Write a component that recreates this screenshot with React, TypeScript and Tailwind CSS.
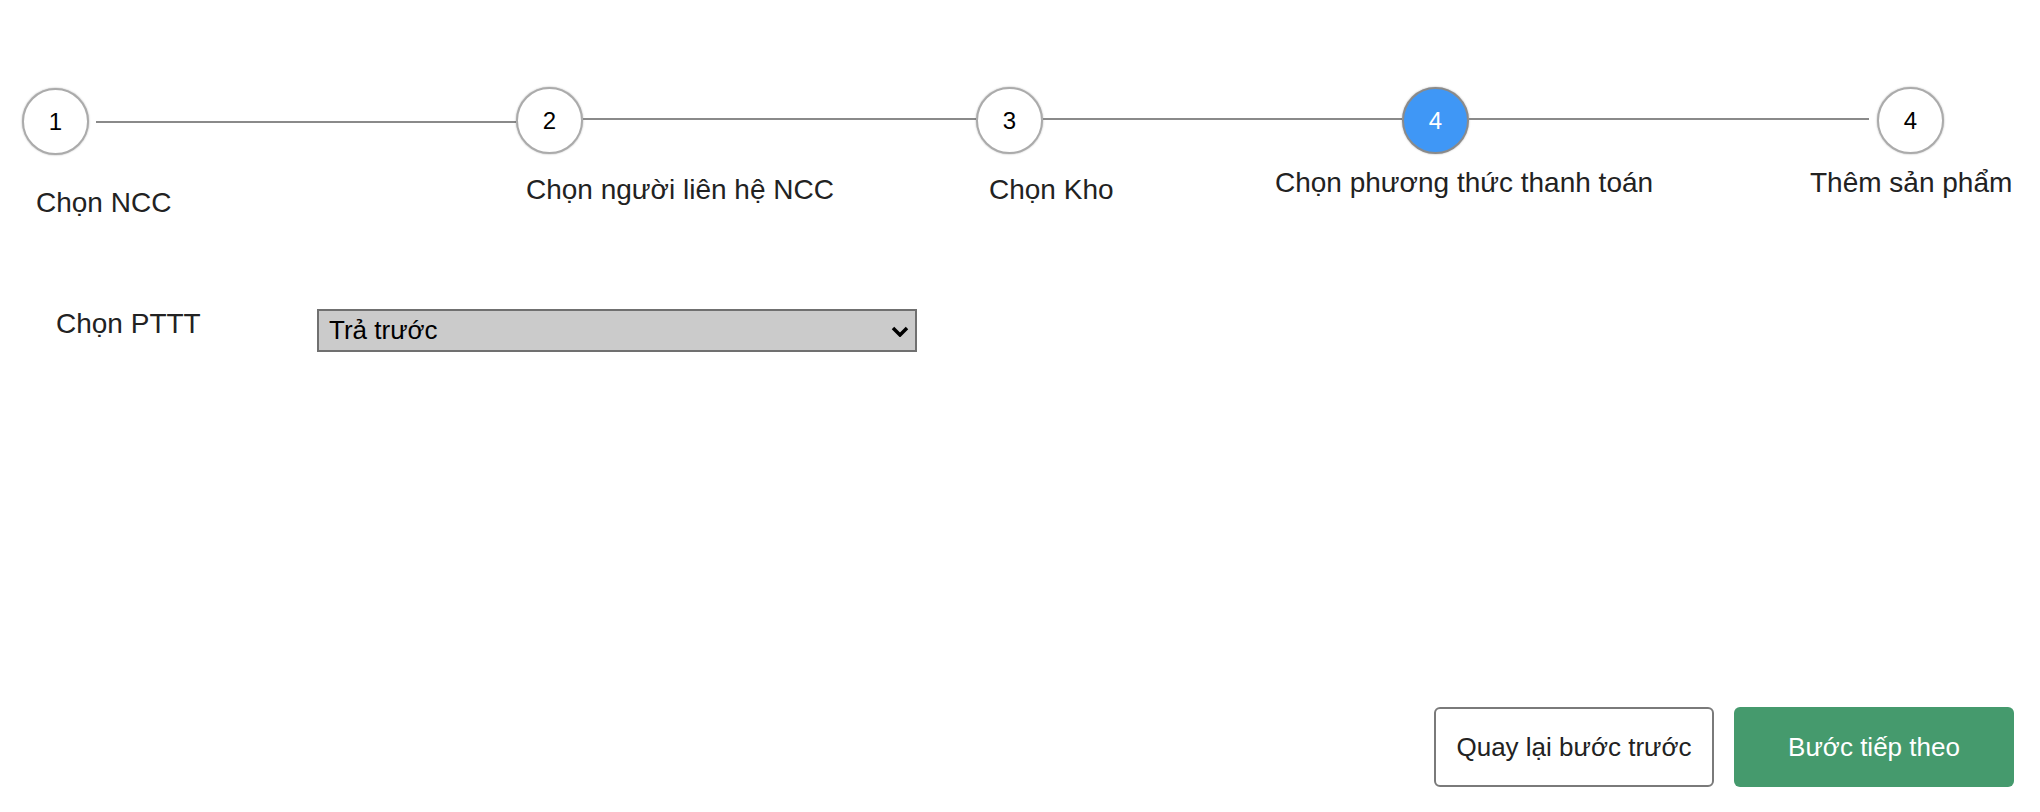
import React from "react";

const Circle = ({ n, active = false, cls = "" }: { n: string; active?: boolean; cls?: string }) => (
  <div
    className={
      "w-[67px] h-[67px] shrink-0 rounded-full flex items-center justify-center text-[24px] border-2 shadow-[0_0_2px_rgba(0,0,0,0.35)] " +
      (active ? "bg-[#3f97f6] border-[#8a8a8a] text-white " : "bg-white border-[#ababab] text-black ") +
      cls
    }
  >
    {n}
  </div>
);

export default function App() {
  return (
    <div
      className="w-[2040px] h-[812px] bg-white text-[#222] overflow-hidden"
      style={{ fontFamily: '"Liberation Sans", Arial, sans-serif' }}
    >
      {/* stepper circles and connectors */}
      <div className="flex items-start pt-[87px] pl-[22px]">
        <Circle n="1" cls="mt-[1px]" />
        <div className="ml-[7px] w-[420px] h-[2px] bg-[#8a8a8a] mt-[34px]" />
        <Circle n="2" />
        <div className="w-[393px] h-[2px] bg-[#8a8a8a] mt-[31px]" />
        <Circle n="3" />
        <div className="w-[359px] h-[2px] bg-[#8a8a8a] mt-[31px]" />
        <Circle n="4" active />
        <div className="w-[400px] h-[2px] bg-[#8a8a8a] mt-[31px]" />
        <Circle n="4" cls="ml-[8px]" />
      </div>

      {/* step labels */}
      <div className="flex items-start text-[28px] leading-[32px]">
        <div className="w-[500px] pl-[36px] mt-[32px]">Chọn NCC</div>
        <div className="w-[460px] pl-[26px] mt-[19px]">Chọn người liên hệ NCC</div>
        <div className="w-[300px] pl-[29px] mt-[19px]">Chọn Kho</div>
        <div className="w-[540px] pl-[15px] mt-[12px]">Chọn phương thức thanh toán</div>
        <div className="w-[240px] pl-[10px] mt-[12px]">Thêm sản phẩm</div>
      </div>

      {/* form row */}
      <div className="flex items-start mt-[90px]">
        <div className="w-[317px] pl-[56px] text-[28px] leading-[32px] -mt-[1px]">Chọn PTTT</div>
        <div className="relative w-[600px] h-[43px]">
          <select
            defaultValue="tra-truoc"
            className="appearance-none w-full h-full bg-[#cbcbcb] border-2 border-[#707070] pl-[10px] text-[26px] text-black outline-none"
            style={{ fontFamily: '"Liberation Sans", Arial, sans-serif' }}
          >
            <option value="tra-truoc">Trả trước</option>
            <option value="tra-sau">Trả sau</option>
          </select>
          <svg
            className="absolute right-[8px] top-[17px] pointer-events-none"
            width="18"
            height="11"
            viewBox="0 0 18 11"
          >
            <path d="M2 2 L9 9 L16 2" fill="none" stroke="#000" strokeWidth="3.5" />
          </svg>
        </div>
      </div>

      {/* buttons */}
      <div className="flex justify-end gap-[20px] pr-[26px] mt-[355px]">
        <button className="w-[280px] h-[80px] rounded-[6px] border-2 border-[#7a7a7a] bg-white text-[26px] text-[#222]">
          Quay lại bước trước
        </button>
        <button className="w-[280px] h-[80px] rounded-[6px] bg-[#459a6d] text-[26px] text-white">
          Bước tiếp theo
        </button>
      </div>
    </div>
  );
}
